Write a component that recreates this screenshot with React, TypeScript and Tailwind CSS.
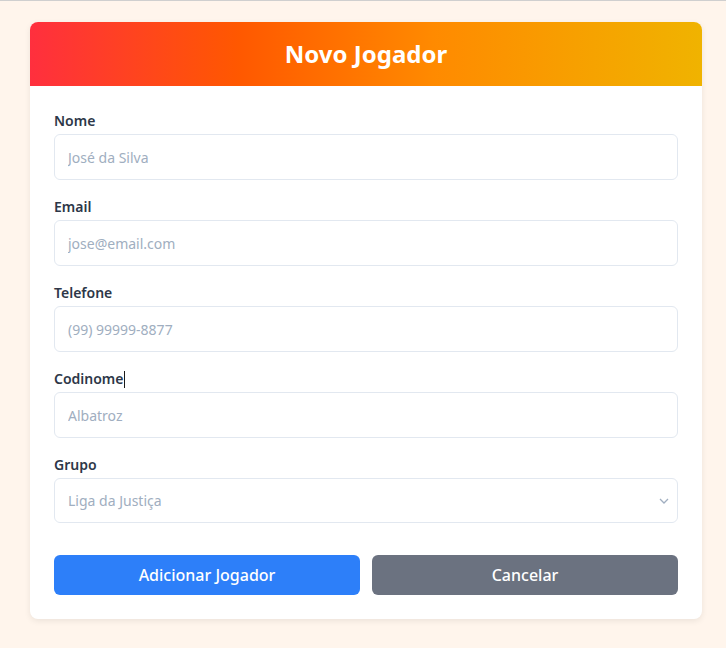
import React from 'react';

const fields = [
    { label: 'Nome', placeholder: 'José da Silva', type: 'text' },
    { label: 'Email', placeholder: 'jose@email.com', type: 'email' },
    { label: 'Telefone', placeholder: '(99) 99999-8877', type: 'tel' },
    { label: 'Codinome', placeholder: 'Albatroz', type: 'text', caret: true },
];

const App: React.FC = () => {
    return (
        <div className="min-h-[648px] bg-[#fff5ec] border-t border-[#cfcfcf] pt-[21px] font-['Noto_Sans',sans-serif]">
            <div className="ml-[30px] w-[672px] bg-white rounded-lg overflow-hidden shadow-[0_2px_6px_rgba(0,0,0,0.08)]">
                <div className="h-16 flex items-center justify-center bg-[linear-gradient(to_right,#ff2f3e_0%,#ff5800_31%,#ff8a00_60%,#f0b300_100%)]">
                    <h1 className="text-white text-[24px] font-bold">Novo Jogador</h1>
                </div>

                <form className="px-6 pt-6 pb-6" onSubmit={(e) => e.preventDefault()}>
                    {fields.map((f) => (
                        <div key={f.label} className="mb-4">
                            <label className="flex items-center text-sm font-semibold text-[#2d3748] leading-[22px] mb-[2px]">
                                {f.label}
                                {f.caret && <span className="inline-block w-px h-[17px] bg-[#1a1a1a]" />}
                            </label>
                            <input
                                type={f.type}
                                placeholder={f.placeholder}
                                className="w-full h-[46px] px-[13px] text-sm rounded-md border border-[#e2e8f0] placeholder:text-[#a0aec0] text-[#2d3748] outline-none"
                            />
                        </div>
                    ))}

                    <div className="mb-8">
                        <label className="block text-sm font-semibold text-[#2d3748] leading-[22px] mb-[2px]">Grupo</label>
                        <div className="relative">
                            <select
                                defaultValue=""
                                className="w-full h-[45px] pl-[13px] pr-8 text-sm rounded-md border border-[#e2e8f0] text-[#a0aec0] bg-white outline-none appearance-none"
                            >
                                <option value="">Liga da Justiça</option>
                            </select>
                            <svg className="absolute right-[9px] top-1/2 -translate-y-1/2 pointer-events-none" width="10" height="6" viewBox="0 0 10 6" fill="none">
                                <path d="M1 1l4 4 4-4" stroke="#a0aec0" strokeWidth="1.3" />
                            </svg>
                        </div>
                    </div>

                    <div className="grid grid-cols-2 gap-3">
                        <button type="submit" className="h-10 rounded-md bg-[#2d7ff9] text-white text-base font-medium">
                            Adicionar Jogador
                        </button>
                        <button type="button" className="h-10 rounded-md bg-[#6b7280] text-white text-base font-medium">
                            Cancelar
                        </button>
                    </div>
                </form>
            </div>
        </div>
    );
};

export default App;
